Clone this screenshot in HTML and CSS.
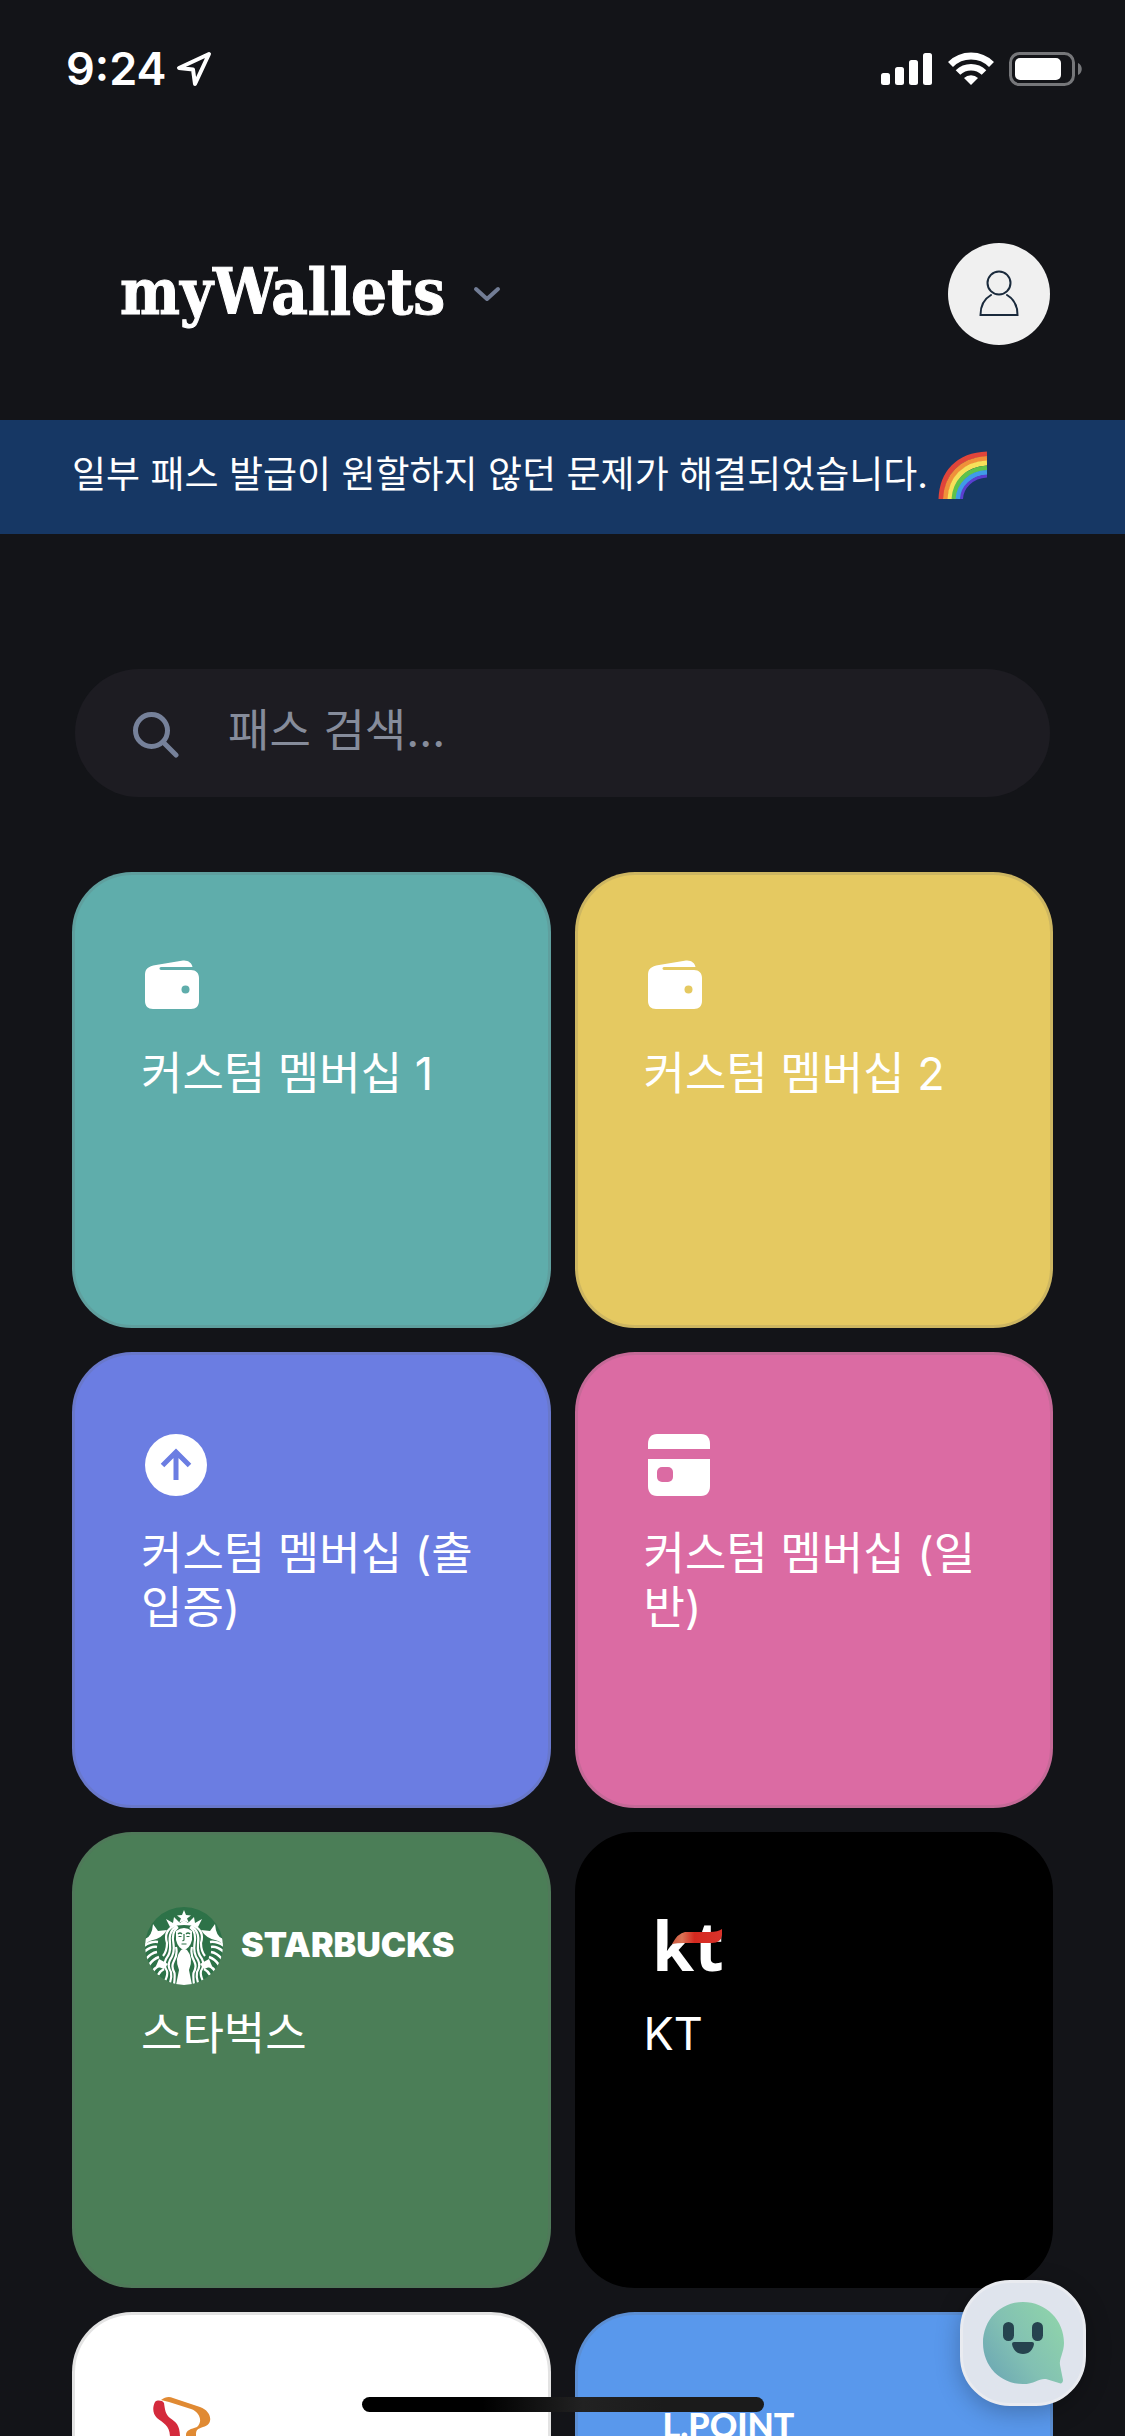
FILE: index.html
```html
<!DOCTYPE html>
<html lang="ko">
<head>
    <meta charset="UTF-8">
    <meta name="viewport" content="width=device-width, initial-scale=1.0">
    <title>myWallets</title>
    <link rel="stylesheet" href="styles.css">
</head>
<body>

<div class="app">
    <div class="status-bar">
        <div class="status-left">
            <span class="time">9:24</span>
            <svg width="38" height="38" viewBox="0 0 38 38">
                <path d="M34 4 L4 18 L18 19.500 L20 34 Z" fill="none" stroke="#fff" stroke-width="4" stroke-linejoin="round"/>
            </svg>
        </div>
        <div class="status-right">
            <svg width="52" height="34" viewBox="0 0 52 34" fill="#fff">
                <rect x="0" y="21" width="9" height="12" rx="2.500"/>
                <rect x="14" y="15" width="9" height="18" rx="2.500"/>
                <rect x="28" y="8" width="9" height="25" rx="2.500"/>
                <rect x="42" y="1" width="9" height="32" rx="2.500"/>
            </svg>
            <svg width="46" height="34" viewBox="0 0 46 34" fill="none" stroke="#fff">
                <path d="M2.500 12.500 A29 29 0 0 1 43.500 12.500" stroke-width="7"/>
                <path d="M10 20.500 A18.500 18.500 0 0 1 36 20.500" stroke-width="6.500"/>
                <path d="M23 33 L16 26 A10 10 0 0 1 30 26 Z" fill="#fff" stroke="none"/>
            </svg>
            <svg width="74" height="34" viewBox="0 0 74 34">
                <rect x="1.500" y="1.500" width="63" height="31" rx="9" fill="none" stroke="#76777a" stroke-width="3"/>
                <rect x="6" y="6" width="46" height="22" rx="5" fill="#fff"/>
                <path d="M69 11 C74 13 74 21 69 23 Z" fill="#76777a"/>
            </svg>
        </div>
    </div>

    <header class="header">
        <button class="brand" type="button">
            <span class="brand-name">myWallets</span>
            <svg width="28" height="16" viewBox="0 0 28 16">
                <path d="M3 3 L14 13 L25 3" fill="none" stroke="#727d95" stroke-width="4" stroke-linecap="round" stroke-linejoin="round"/>
            </svg>
        </button>
        <button class="avatar" type="button" aria-label="프로필">
            <svg width="42" height="50" viewBox="0 0 42 50" fill="none" stroke="#1a2a3c" stroke-width="2">
                <circle cx="21" cy="14" r="11.500"/>
                <path d="M13 26 C6 30 2.500 36 2.500 46 H39.500 C39.500 36 36 30 29 26" stroke-linecap="round"/>
            </svg>
        </button>
    </header>

    <div class="notice">
        <span>일부 패스 발급이 원할하지 않던 문제가 해결되었습니다.</span>
        <svg width="49" height="48" viewBox="0 0 49 48" fill="none" stroke-width="5" role="img" aria-label="무지개">
            <path d="M3 48 C4 22 20 4 49 3" stroke="#e0453a"/>
            <path d="M7.500 48 C8.500 25 23 9 49 7.500" stroke="#f0913a"/>
            <path d="M12 48 C13 28 26 13 49 12" stroke="#f7e05a"/>
            <path d="M16 48 C17 31 29 18 49 17" stroke="#5fc24a"/>
            <path d="M20 48 C21 34 32 22 49 21.500" stroke="#3f9be8"/>
            <path d="M23.500 48 C24 36 34 26 49 25" stroke="#5a3fd0" stroke-width="3"/>
        </svg>
    </div>

    <main class="content">
        <label class="search">
            <svg width="46" height="46" viewBox="0 0 46 46" fill="none" stroke="#76819a" stroke-width="5">
                <circle cx="18.500" cy="18.500" r="16"/>
                <path d="M30.500 30.500 L43 43" stroke-linecap="round"/>
            </svg>
            <input type="text" placeholder="패스 검색..." aria-label="패스 검색">
        </label>

        <div class="grid">
            <a class="card teal" href="#">
                <span class="logo">
                    <svg width="58" height="50" viewBox="0 0 58 50">
                        <path d="M12 5 L39 0.500 C44 0 48 3 48.500 7 H17 C15 7 15 10 17 10 H47 C52 10 55 13 55 18 V41 C55 46 52 49 47 49 H9 C4 49 1 46 1 41 V15 C1 9 4 6.500 12 5 Z" fill="#fff"/>
                        <circle class="hole" cx="41.500" cy="29.500" r="4"/>
                    </svg>
                </span>
                <span class="title">커스텀 멤버십 1</span>
            </a>
            <a class="card yellow" href="#">
                <span class="logo">
                    <svg width="58" height="50" viewBox="0 0 58 50">
                        <path d="M12 5 L39 0.500 C44 0 48 3 48.500 7 H17 C15 7 15 10 17 10 H47 C52 10 55 13 55 18 V41 C55 46 52 49 47 49 H9 C4 49 1 46 1 41 V15 C1 9 4 6.500 12 5 Z" fill="#fff"/>
                        <circle class="hole" cx="41.500" cy="29.500" r="4"/>
                    </svg>
                </span>
                <span class="title">커스텀 멤버십 2</span>
            </a>
            <a class="card indigo" href="#">
                <span class="logo">
                    <svg width="64" height="62" viewBox="0 0 64 62">
                        <circle cx="32" cy="31" r="31" fill="#fff"/>
                        <path class="arrow" d="M32 46 V18 M18.500 31.500 L32 18 L45.500 31.500"/>
                    </svg>
                </span>
                <span class="title">커스텀 멤버십 (출입증)</span>
            </a>
            <a class="card pink" href="#">
                <span class="logo">
                    <svg width="64" height="62" viewBox="0 0 64 62">
                        <path d="M1 15 V10 C1 4 4 0 10 0 H54 C60 0 63 4 63 10 V15 Z" fill="#fff"/>
                        <path d="M1 25 H63 V52 C63 58 60 62 54 62 H10 C4 62 1 58 1 52 Z" fill="#fff"/>
                        <rect class="hole" x="10" y="33" width="16" height="15" rx="5"/>
                    </svg>
                </span>
                <span class="title">커스텀 멤버십 (일반)</span>
            </a>
            <a class="card green" href="#">
                <span class="logo">
                    <svg width="80" height="80" viewBox="0 0 80 80">
                        <defs>
                            <clipPath id="seal"><circle cx="40" cy="41" r="39"/></clipPath>
                        </defs>
                        <circle cx="40" cy="41" r="39" fill="#2d7248"/>
                        <g clip-path="url(#seal)">
                            <!-- crown -->
                            <path d="M40 5 L42 10 L47 10.500 L43 13.500 L45 18 L40 15.500 L35 18 L37 13.500 L33 10.500 L38 10 Z" fill="#fff"/>
                            <path d="M22 14 L29 18 L30 12 L36 18 L40 15 L44 18 L50 12 L51 18 L58 14 L54 22 Q40 18 26 22 Z" fill="#fff"/>
                            <!-- raised tails -->
                            <g id="tail">
                                <path d="M1 34 Q8 32 9 19 L14 26 L23 25 Q18 33 9 35 Q4 36 1 40 Z" fill="#fff"/>
                                <g fill="none" stroke="#fff" stroke-width="2.500">
                                    <path d="M0 41 Q7 36 14 37"/>
                                    <path d="M0 47 Q7 41 13 42"/>
                                    <path d="M2 54 Q7 48 13 47"/>
                                    <path d="M5 60 Q9 54 15 52"/>
                                    <path d="M9 66 Q12 61 19 60"/>
                                    <path d="M14 70 Q16 66 20 64"/>
                                </g>
                                <path d="M15 54 L24 59 L20 64 L12 61 Z" fill="#fff"/>
                            </g>
                            <use href="#tail" transform="matrix(-1 0 0 1 80 0)"/>
                            <!-- face and hair -->
                            <path d="M32 26 Q40 20 48 26 V35 Q46 43 40 45 Q34 43 32 35 Z" fill="#fff"/>
                            <path d="M37 45 Q40 43 43 45 Q50 53 45 65 L48 80 H32 L35 65 Q30 53 37 45 Z" fill="#fff"/>
                            <g id="hair" fill="none" stroke="#fff" stroke-width="2.200">
                                <path d="M33 21 Q24 26 26 39 Q27 48 22 54 Q19 60 23 66 Q24 70 21 76"/>
                                <path d="M34 22 Q27 27 29.500 39 Q31 48 26 55 Q23 61 27 67 Q28 72 26 78"/>
                                <path d="M32 42 Q34 49 29.500 57 Q27 62 30.500 68 Q31 72 30 80"/>
                                <path d="M32 20 Q19 25 23 38 Q23 46 19 51"/>
                            </g>
                            <use href="#hair" transform="matrix(-1 0 0 1 80 0)"/>
                            <path d="M34 29 Q36 27 38 29 M42 29 Q44 27 46 29 M34.500 31.500 H37.500 M42.500 31.500 H45.500 M40 29 V35 L38.500 36 M37.500 39 H42.500" fill="none" stroke="#2d7248" stroke-width="1.200"/>
                        </g>
                    </svg>
                    <span class="starbucks">STARBUCKS</span>
                </span>
                <span class="title">스타벅스</span>
            </a>
            <a class="card black" href="#">
                <span class="logo">
                    <svg class="kt-logo" width="86" height="66" viewBox="0 0 86 66">
                        <defs>
                            <linearGradient id="ribbon" x1="0" x2="1" y1="0" y2="0">
                                <stop offset="0" stop-color="#c9583e"/>
                                <stop offset="0.200" stop-color="#dc7355"/>
                                <stop offset="0.450" stop-color="#d5291f"/>
                                <stop offset="1" stop-color="#d9332b"/>
                            </linearGradient>
                        </defs>
                        <text class="kt" x="5" y="59">kt</text>
                        <path d="M25 32 Q31 21 38 20 H63 Q71 20 75 17 V23 Q74 31 65 31 H37 Q30 31 25 32 Z" fill="url(#ribbon)"/>
                    </svg>
                </span>
                <span class="title">KT</span>
            </a>
            <a class="card white" href="#" aria-label="T 멤버십">
                <span class="logo">
                    <svg width="80" height="80" viewBox="1 -9 80 80">
                        <path d="M12 8 C9 14 10 20 14 24 C20 29 27 31 27 43 V71 H37 V43 C37 31 33 28 27 24 C22 20 22 15 21 9 C19 6 14 6 12 8 Z" fill="#d42a3c"/>
                        <path d="M18 6 C22 3 26 2 30 4 L57 13 C69 17 71 31 60 33 C54 35 53 36 53 41 V71 H43 V41 C43 36 48 35 54 33 C60 28 57 18 48 15 L26 8 C23 7 21 7 18 6 Z" fill="#e08a33"/>
                    </svg>
                </span>
            </a>
            <a class="card blue" href="#">
                <span class="logo">
                    <span class="lpoint">L.POINT</span>
                </span>
            </a>
        </div>
    </main>
</div>

<button class="chat" type="button" aria-label="문의하기">
    <svg width="88" height="88" viewBox="0 0 88 88">
        <defs>
            <linearGradient id="bubble" x1="0" y1="1" x2="1" y2="0.300">
                <stop offset="0" stop-color="#68a3b4"/>
                <stop offset="0.500" stop-color="#82c0b3"/>
                <stop offset="1" stop-color="#8ed2ab"/>
            </linearGradient>
        </defs>
        <path d="M44 3 C67 3 85 21 85 44 C85 53 80 60 81 66 L84 81 C84 84 82 85 80 84 L67 80 C60 79 56 85 44 85 C21 85 4 67 4 44 C4 21 21 3 44 3 Z" fill="url(#bubble)"/>
        <rect x="24" y="23" width="11" height="19" rx="5.500" fill="#26434f"/>
        <rect x="53" y="23" width="11" height="19" rx="5.500" fill="#26434f"/>
        <path d="M35 43 H53 Q55 43 55 45 C54 51 50 55 44 55 C38 55 34 51 33 45 Q33 43 35 43 Z" fill="#26434f"/>
    </svg>
</button>
<div class="home-indicator"></div>

</body>
</html>
```
FILE: styles.css
```css
* {
    box-sizing: border-box;
}

body {
    margin: 0;
    background-color: #131418;
    color: #fff;
    font-family: Inter, "Noto Sans CJK KR", sans-serif;
}

button {
    border: none;
    padding: 0;
    background: none;
    color: inherit;
    cursor: pointer;
}

svg {
    display: block;
    flex: none;
}

.app {
    height: 100vh;
    overflow: hidden;
}

.status-bar {
    display: flex;
    justify-content: space-between;
    align-items: center;
    height: 138px;
    padding: 0 42px 0 66px;
}

.status-left,
.status-right {
    display: flex;
    align-items: center;
    gap: 15px;
}

.status-left {
    gap: 9px;
}

.time {
    font-size: 45px;
    font-weight: 600;
    line-height: 54px;
}

.header {
    display: flex;
    justify-content: space-between;
    align-items: center;
    padding: 105px 75px 75px 120px;
}

.brand {
    display: flex;
    align-items: center;
    gap: 28px;
}

.brand-name {
    padding-bottom: 4px;
    font-family: "DejaVu Serif Condensed", "DejaVu Serif", serif;
    font-size: 63px;
    font-weight: 700;
    font-stretch: condensed;
    line-height: 84px;
    -webkit-text-stroke: 1px #fff;
}

.avatar {
    display: flex;
    justify-content: center;
    align-items: center;
    width: 102px;
    height: 102px;
    border-radius: 50%;
    background-color: #f0f0f0;
}

.notice {
    display: flex;
    align-items: center;
    gap: 10px;
    padding: 28px 72px 32px;
    background-color: #163764;
    font-size: 37px;
    font-weight: 400;
    line-height: 54px;
}

.content {
    padding: 135px 72px 0;
}

.search {
    display: flex;
    align-items: center;
    gap: 49px;
    height: 128px;
    margin: 0 3px 75px;
    padding: 3px 58px 0;
    border-radius: 64px;
    background-color: #1d1c22;
}

.search input {
    flex: 1;
    min-width: 0;
    border: none;
    outline: none;
    padding: 0 0 8px;
    background: none;
    color: #fff;
    font-family: inherit;
    font-size: 45px;
    font-weight: 400;
    line-height: 54px;
}

.search input::placeholder {
    color: #868c9b;
    opacity: 1;
}

.grid {
    display: grid;
    grid-template-columns: 1fr 1fr;
    gap: 24px;
}

.card {
    display: flex;
    flex-direction: column;
    gap: 18px;
    height: 456px;
    padding: 66px;
    border: 3px solid rgba(100, 100, 100, 0.18);
    border-radius: 60px;
    color: #fff;
    text-decoration: none;
}

.logo {
    display: flex;
    align-items: center;
    gap: 17px;
    height: 88px;
    padding-left: 3px;
}

.title {
    font-size: 45px;
    font-weight: 400;
    line-height: 54px;
    word-break: break-all;
}

.teal { background-color: #5fadab; }
.yellow { background-color: #e5c961; }
.indigo { background-color: #6b7de2; }
.pink { background-color: #db6ba3; }
.green { background-color: #4b7e57; }
.black { background-color: #000; border-color: #000; }
.white { background-color: #fff; }
.blue { background-color: #5998ec; }

.teal .hole { fill: #5fadab; }
.yellow .hole { fill: #e5c961; }
.pink .hole { fill: #db6ba3; }

.arrow {
    fill: none;
    stroke: #6b7de2;
    stroke-width: 5;
}

.starbucks {
    font-size: 34px;
    font-weight: 900;
    line-height: 40px;
}

.kt-logo {
    overflow: visible;
}

.kt {
    font-family: "Open Sans", sans-serif;
    font-size: 68px;
    font-weight: 700;
    fill: #fff;
}

.lpoint {
    padding-left: 16px;
    font-family: Lato, sans-serif;
    font-size: 34px;
    font-weight: 900;
    line-height: 40px;
}

.chat {
    position: fixed;
    right: 39px;
    bottom: 30px;
    display: flex;
    justify-content: center;
    align-items: center;
    width: 126px;
    height: 126px;
    border: 3px solid #e9ebf0;
    border-radius: 50px;
    background-color: #dfe4ed;
    box-shadow: 0 6px 24px rgba(0, 0, 0, 0.25);
}

.home-indicator {
    position: fixed;
    left: 50%;
    bottom: 24px;
    width: 402px;
    height: 15px;
    margin-left: -201px;
    border-radius: 8px;
    background: linear-gradient(to right, #000 30%, #222 55%, #1b1b1b 75%);
}
```
